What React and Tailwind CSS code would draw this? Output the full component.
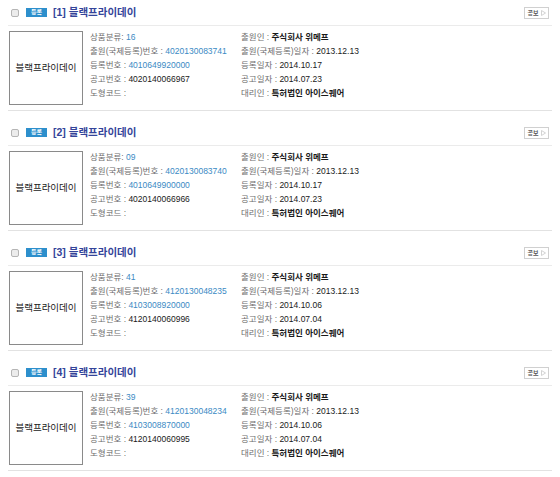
import React from "react";

const items = [
  { n: 1, cls: "16", appNo: "4020130083741", regNo: "4010649920000", pubNo: "4020140066967", appDate: "2013.12.13", regDate: "2014.10.17", pubDate: "2014.07.23" },
  { n: 2, cls: "09", appNo: "4020130083740", regNo: "4010649900000", pubNo: "4020140066966", appDate: "2013.12.13", regDate: "2014.10.17", pubDate: "2014.07.23" },
  { n: 3, cls: "41", appNo: "4120130048235", regNo: "4103008920000", pubNo: "4120140060996", appDate: "2013.12.13", regDate: "2014.10.06", pubDate: "2014.07.04" },
  { n: 4, cls: "39", appNo: "4120130048234", regNo: "4103008870000", pubNo: "4120140060995", appDate: "2013.12.13", regDate: "2014.10.06", pubDate: "2014.07.04" },
];

function Item({ d }) {
  return (
    <div className="mb-[9px]">
      <div className="h-[26px] flex items-center border-b border-[#ebebeb]">
        <span className="ml-[3px] w-[8px] h-[8px] rounded-[2px] border border-[#b5b5b5] bg-[#ececec]" />
        <span className="ml-[7px] w-[21px] h-[9px] bg-[#2d8fcc] text-white text-[6px] leading-[9px] text-center font-bold">등록</span>
        <span className="ml-[6px] text-[10.5px] font-bold text-[#34449a] leading-none">[{d.n}] 블랙프라이데이</span>
        <span className="ml-auto mr-[3px] h-[12px] w-[25px] border border-[#d0d0d0] bg-white flex items-center justify-center gap-[2px]">
          <span className="text-[6px] text-[#555] leading-none font-bold">공보</span>
          <svg width="5" height="6" viewBox="0 0 5 6">
            <polygon points="0.5,0.5 4.5,3 0.5,5.5" fill="none" stroke="#c8c8c8" strokeWidth="0.8" />
          </svg>
        </span>
      </div>
      <div className="pt-[5px] pb-[5px] flex border-b border-[#e2e2e2]">
        <div className="ml-px w-[74px] h-[74px] border border-[#8a8a8a] flex items-center justify-center text-[9.5px] text-[#222]">
          블랙프라이데이
        </div>
        <div className="ml-[7px] w-[151px] text-[8.5px] leading-[14px] -mt-[1px] text-[#6e6e6e]">
          <div>상품분류: <span className="text-[#3b8ac4]">{d.cls}</span></div>
          <div>출원(국제등록)번호 : <span className="text-[#3b8ac4]">{d.appNo}</span></div>
          <div>등록번호 : <span className="text-[#3b8ac4]">{d.regNo}</span></div>
          <div>공고번호 : <span className="text-[#1a1a1a]">{d.pubNo}</span></div>
          <div>도형코드 :</div>
        </div>
        <div className="text-[8.5px] leading-[14px] -mt-[1px] text-[#6e6e6e]">
          <div>출원인 : <span className="text-[#1a1a1a] font-bold">주식회사 위메프</span></div>
          <div>출원(국제등록)일자 : <span className="text-[#1a1a1a]">{d.appDate}</span></div>
          <div>등록일자 : <span className="text-[#1a1a1a]">{d.regDate}</span></div>
          <div>공고일자 : <span className="text-[#1a1a1a]">{d.pubDate}</span></div>
          <div>대리인 : <span className="text-[#1a1a1a] font-bold">특허법인 아이스퀘어</span></div>
        </div>
      </div>
    </div>
  );
}

export default function App() {
  return (
    <div className="w-[560px] h-[477px] overflow-hidden bg-white px-[8px]" style={{ fontFamily: '"Liberation Sans", "Noto Sans CJK KR", sans-serif' }}>
      {items.map((d) => (
        <Item key={d.n} d={d} />
      ))}
    </div>
  );
}
